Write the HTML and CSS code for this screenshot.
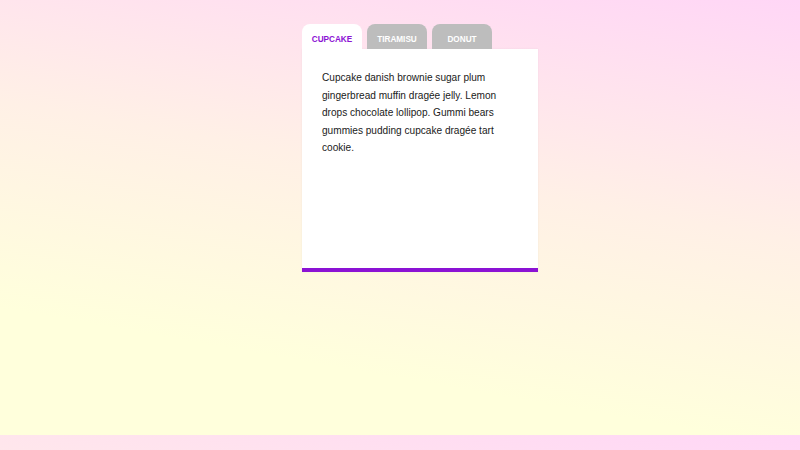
FILE: index.html
```html
<!DOCTYPE html>
<html lang="en">
<head>
<meta charset="utf-8">
<title>Tabs</title>
<link rel="stylesheet" href="styles.css">
</head>
<body>
  <div class="tabs">
    <div class="tab-list">
      <div class="tab tab-active">Cupcake</div>
      <div class="tab">Tiramisu</div>
      <div class="tab">Donut</div>
    </div>
    <div class="panel">
      <p>Cupcake danish brownie sugar plum gingerbread muffin dragée jelly. Lemon drops chocolate lollipop. Gummi bears gummies pudding cupcake dragée tart cookie.</p>
    </div>
  </div>
</body>
</html>
```
FILE: styles.css
```css
html {
  background-color: #ffffdc;
  background-image: linear-gradient(190deg, #ffd6f6 0%, #fff0e6 42%, #ffffdc 78%);
  background-size: 100% 435px;
  background-repeat: repeat-y;
}

body {
  margin: 0;
  height: 450px;
  font-family: "Liberation Sans", Arial, sans-serif;
}

.tabs {
  width: 236px;
  margin: 0 0 0 302px;
  padding-top: 24px;
}

.tab-list {
  display: flex;
  gap: 5px;
}

.tab {
  width: 60px;
  height: 25px;
  box-sizing: border-box;
  padding-top: 11px;
  border-radius: 8px 8px 0 0;
  background: #bdbdbd;
  color: #ffffff;
  font-size: 8.2px;
  font-weight: bold;
  line-height: 10px;
  text-align: center;
  text-transform: uppercase;
}

.tab-active {
  background: #ffffff;
  color: #8b12d4;
}

.panel {
  height: 223px;
  box-sizing: border-box;
  padding: 20px 20px;
  background: #ffffff;
  border-bottom: 4px solid #8b12d4;
  box-shadow: 0 0 2px rgba(0, 0, 0, 0.06);
}

.panel p {
  margin: 0;
  font-size: 10.1px;
  line-height: 17.5px;
  color: #1a1a1a;
}
```
